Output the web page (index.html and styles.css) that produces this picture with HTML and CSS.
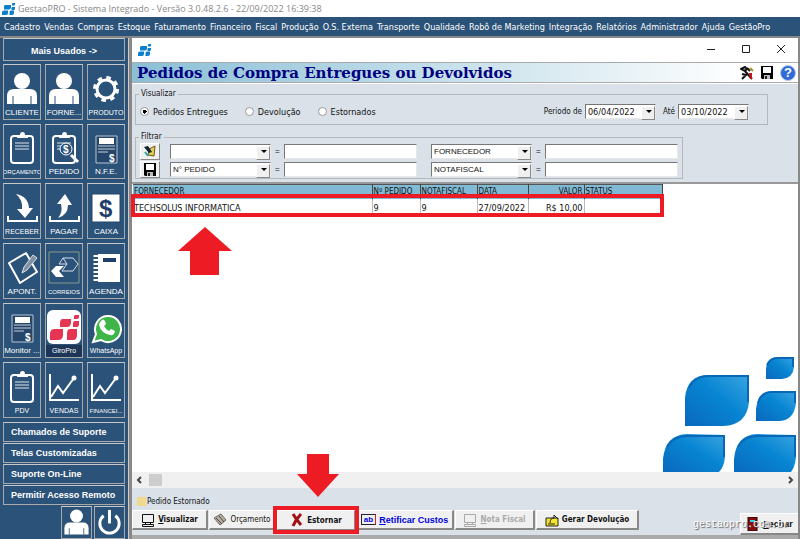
FILE: index.html
```html
<!DOCTYPE html>
<html lang="pt-BR">
    <head>
        <meta charset="UTF-8" />
        <meta name="viewport" content="width=device-width, initial-scale=1.0" />
        <title>GestaoPRO - Sistema Integrado</title>
        <link rel="stylesheet" href="styles.css">
    </head>
    <body>
        <!-- Shared icon shapes -->
        <svg class="defs" width="0" height="0" aria-hidden="true">
            <defs>
                <linearGradient id="leaf-fill" x1="0" y1="1" x2="1" y2="0">
                    <stop offset="0" stop-color="#0a68bd" />
                    <stop offset="0.55" stop-color="#0785d2" />
                    <stop offset="1" stop-color="#3ba5e2" />
                </linearGradient>
                <symbol id="logo" viewBox="0 0 13 12">
                    <path d="M3 2h6v2.500q0 2-2 2H2V4q0-2 1-2zM2 7.500h4V10q0 2-2 2H0V9.500q0-2 2-2zM9 7.500h3V10q0 2-2 2H7.500V9.500q0-2 1.500-2zM10 4h3v1.500q0 1.500-1.500 1.500H9.500V5zM10.500 0H13v1.500q0 1-1 1h-2V1z" fill="#0b7fc9" />
                </symbol>
                <symbol id="person" viewBox="0 0 36 34">
                    <circle cx="18" cy="9" r="8" fill="#fff" />
                    <path d="M3 32V24q0-7 7-7h16q7 0 7 7v8z" fill="#fff" />
                    <path d="M9 32V24M27 32V24" stroke="#2b5278" stroke-width="1" />
                </symbol>
                <symbol id="clipboard" viewBox="0 0 36 34">
                    <rect x="7" y="5" width="22" height="27" rx="3" fill="none" stroke="#fff" stroke-width="2" />
                    <path d="M13 7V4h3q0-3 2.500-3T21 4h3v3z" fill="#fff" />
                    <path d="M11 12h14M11 15h14M11 18h14" stroke="#dfe5ec" stroke-width="1" />
                </symbol>
                <symbol id="invoice" viewBox="0 0 36 34">
                    <path d="M8 5h21v27H8z" fill="#25456b" stroke="#b9c6d4" stroke-width="1" />
                    <path d="M11 7h15v6H11z" fill="#fff" />
                    <path d="M10 15h17M10 18h17M10 21h10" stroke="#c9d2dd" />
                    <text x="21" y="31" class="sign">$</text>
                </symbol>
                <symbol id="chart" viewBox="0 0 36 34">
                    <path d="M4 4v26h29" fill="none" stroke="#fff" stroke-width="2" />
                    <path d="M5 27l7-11 5 7L28 8" fill="none" stroke="#fff" stroke-width="2" />
                    <circle cx="28" cy="8" r="2.500" fill="#fff" />
                </symbol>
                <symbol id="floppy" viewBox="0 0 14 13">
                    <path d="M1 0h12v13H2L1 12z" fill="#000" />
                    <path d="M3 1h8v6H3z" fill="#fff" />
                    <path d="M4 9h6v4H4z" fill="#bbb" />
                    <path d="M5 10h2v3H5z" fill="#222" />
                </symbol>
                <symbol id="monitor" viewBox="0 0 14 14">
                    <path d="M1.500 1.500h11v8h-11zM4.500 9.500h5v2h-5zM1.500 11.500h11v2h-11z" fill="none" stroke="currentColor" />
                    <path class="screen" d="M3 3h8v5H3z" />
                </symbol>
            </defs>
        </svg>

        <header class="titlebar">
            <svg class="logo"><use href="#logo" /></svg>
            <span>GestaoPRO - Sistema Integrado - Versão 3.0.48.2.6 - 22/09/2022 16:39:38</span>
        </header>

        <nav class="menubar">
            <a href="#cadastro">Cadastro</a>
            <a href="#vendas">Vendas</a>
            <a href="#compras">Compras</a>
            <a href="#estoque">Estoque</a>
            <a href="#faturamento">Faturamento</a>
            <a href="#financeiro">Financeiro</a>
            <a href="#fiscal">Fiscal</a>
            <a href="#producao">Produção</a>
            <a href="#os">O.S. Externa</a>
            <a href="#transporte">Transporte</a>
            <a href="#qualidade">Qualidade</a>
            <a href="#robo">Robô de Marketing</a>
            <a href="#integracao">Integração</a>
            <a href="#relatorios">Relatórios</a>
            <a href="#administrador">Administrador</a>
            <a href="#ajuda">Ajuda</a>
            <a href="#gestaopro">GestãoPro</a>
        </nav>

        <div class="container">
            <aside class="sidebar">
                <button class="side-button side-header">Mais Usados -&gt;</button>
                <div class="tiles">
                    <button class="tile">
                        <svg><use href="#person" /></svg>
                        <span>CLIENTE</span>
                    </button>
                    <button class="tile">
                        <svg><use href="#person" /></svg>
                        <span>FORNE...</span>
                    </button>
                    <button class="tile">
                        <svg viewBox="0 0 36 34">
                            <circle cx="18" cy="17" r="9" fill="none" stroke="#fff" stroke-width="3" />
                            <circle cx="18" cy="17" r="11.500" fill="none" stroke="#fff" stroke-width="3" stroke-dasharray="4.500 4.530" />
                        </svg>
                        <span class="small">PRODUTO</span>
                    </button>

                    <button class="tile">
                        <svg><use href="#clipboard" /></svg>
                        <span class="tiny">ORÇAMENTO</span>
                    </button>
                    <button class="tile">
                        <svg viewBox="0 0 36 34">
                            <use href="#clipboard" width="36" height="34" />
                            <circle cx="20" cy="18" r="6" fill="#2b5278" stroke="#fff" stroke-width="1" />
                            <path d="M25 24l7 7" stroke="#fff" stroke-width="3" />
                            <text x="17" y="22" class="sign">$</text>
                        </svg>
                        <span>PEDIDO</span>
                    </button>
                    <button class="tile">
                        <svg><use href="#invoice" /></svg>
                        <span>N.F.E.</span>
                    </button>

                    <button class="tile">
                        <svg viewBox="0 0 36 34">
                            <path d="M4 25v5h29v-5" fill="none" stroke="#fff" stroke-width="2" />
                            <path d="M12 3q12 2 13 14h4l-8 10-8-9h5Q19 9 12 3z" fill="#fff" />
                        </svg>
                        <span class="small">RECEBER</span>
                    </button>
                    <button class="tile">
                        <svg viewBox="0 0 36 34">
                            <path d="M4 25v5h29v-5" fill="none" stroke="#fff" stroke-width="2" />
                            <path d="M12 27q5-6 3-14h-4l8-10 7 11h-4q0 10-10 13z" fill="#fff" />
                        </svg>
                        <span>PAGAR</span>
                    </button>
                    <button class="tile">
                        <svg viewBox="0 0 36 34">
                            <path d="M4 3h28v28H4z" fill="#fff" stroke="#25456b" />
                            <path d="M5 4h26v26H5z" fill="#fff" />
                            <text x="11" y="26" class="dollar">$</text>
                        </svg>
                        <span>CAIXA</span>
                    </button>

                    <button class="tile">
                        <svg viewBox="0 0 36 34">
                            <path d="M5 12L22 2l11 19-17 11z" fill="none" stroke="#fff" stroke-width="2" stroke-linejoin="round" />
                            <path d="M18 22l2-6L29 4l4 3-10 12z" fill="#8191a3" stroke="#dde3ea" />
                        </svg>
                        <span>APONT.</span>
                    </button>
                    <button class="tile">
                        <svg viewBox="0 0 36 34">
                            <path d="M3 1h30v31H3z" fill="none" stroke="#8c9a8e" />
                            <path d="M17 7h10l5 6-5 7H16l5-7zM17 7l-4 6h8" fill="none" stroke="#d8dde6" />
                            <path d="M5 20l5-5h8l-5 5 5 6h-8z" fill="#fff" />
                        </svg>
                        <span class="tiny">CORREIOS</span>
                    </button>
                    <button class="tile">
                        <svg viewBox="0 0 36 34">
                            <path d="M10 3h22v28H10z" fill="#fff" />
                            <path d="M15 7h13v4H15z" fill="#1e3f69" />
                            <path d="M8 4v27" stroke="#fff" stroke-width="5" stroke-dasharray="2 2" />
                        </svg>
                        <span>AGENDA</span>
                    </button>

                    <button class="tile">
                        <svg><use href="#invoice" /></svg>
                        <span>Monitor ...</span>
                    </button>
                    <button class="tile tile-dark">
                        <svg viewBox="0 0 36 34">
                            <rect x="1" y="0" width="34" height="34" rx="6" fill="#fff" />
                            <path d="M17 9h8v3q0 5-4 5h-7v-4q0-4 3-4zM9 19h8v6q0 5-5 5H4v-6q0-5 5-5zM24 19h7v6q0 5-4 5h-6v-6q0-5 3-5zM29 11h4v3q0 3-2 3h-4v-3q0-3 2-3zM29 5h4v2q0 2-2 2h-3V7q0-2 1-2z" fill="#e53553" />
                        </svg>
                        <span class="small">GiroPro</span>
                    </button>
                    <button class="tile">
                        <svg viewBox="0 0 36 34">
                            <path d="M5 32l3-8A13 13 0 1 1 13 30z" fill="#3eb449" stroke="#fff" stroke-width="2" />
                            <path d="M13 11q2-3 4 0l1 3-2 2q2 4 5 5l2-2 4 2q-1 5-5 4-9-2-11-10 0-2 2-4z" fill="#fff" />
                        </svg>
                        <span class="small">WhatsApp</span>
                    </button>

                    <button class="tile">
                        <svg><use href="#clipboard" /></svg>
                        <span class="small">PDV</span>
                    </button>
                    <button class="tile">
                        <svg><use href="#chart" /></svg>
                        <span class="small">VENDAS</span>
                    </button>
                    <button class="tile">
                        <svg><use href="#chart" /></svg>
                        <span class="tiny">FINANCEI...</span>
                    </button>
                </div>
                <button class="side-button">Chamados de Suporte</button>
                <button class="side-button">Telas Customizadas</button>
                <button class="side-button">Suporte On-Line</button>
                <button class="side-button">Permitir Acesso Remoto</button>
                <div class="session">
                    <button aria-label="Usuário">
                        <svg><use href="#person" /></svg>
                    </button>
                    <button aria-label="Sair">
                        <svg viewBox="0 0 30 32">
                            <path d="M9 9a10 10 0 1 0 12 0" fill="none" stroke="#fff" stroke-width="3" />
                            <path d="M15 3v14" stroke="#fff" stroke-width="3" />
                        </svg>
                    </button>
                </div>
            </aside>

            <main class="window">
                <div class="window-bar">
                    <svg class="logo"><use href="#logo" /></svg>
                    <div class="window-controls">
                        <button aria-label="Minimizar"><svg viewBox="0 0 10 10"><path d="M1 5.500h8" /></svg></button>
                        <button aria-label="Maximizar"><svg viewBox="0 0 10 10"><path d="M1.500 1.500h7v7h-7z" /></svg></button>
                        <button aria-label="Fechar janela"><svg viewBox="0 0 10 10"><path d="M1 1l8 8M9 1L1 9" /></svg></button>
                    </div>
                </div>

                <div class="heading">
                    <h1>Pedidos de Compra Entregues ou Devolvidos</h1>
                    <div class="heading-tools">
                        <button aria-label="Configurar">
                            <svg viewBox="0 0 14 14">
                                <path d="M1 3l4-2 2 2-2 2zM4 4l8 9M2 8l4 1-4 4M7 2l3 3" fill="none" stroke="#111" stroke-width="2" />
                                <path d="M9 7h3v6h-2z" fill="#c01818" />
                                <path d="M10 2l3 3" stroke="#a89020" stroke-width="2" />
                            </svg>
                        </button>
                        <button aria-label="Salvar"><svg viewBox="0 0 14 14"><use href="#floppy" width="14" height="13" /></svg></button>
                        <button class="help" aria-label="Ajuda">?</button>
                    </div>
                </div>

                <form class="filters">
                    <fieldset class="view">
                        <legend>Visualizar</legend>
                        <label><input type="radio" name="view" checked /> Pedidos Entregues</label>
                        <label><input type="radio" name="view" /> Devolução</label>
                        <label><input type="radio" name="view" /> Estornados</label>
                        <div class="period">
                            <label for="from">Periodo de</label>
                            <span class="combo date"><select id="from"><option>06/04/2022</option></select></span>
                            <label for="to">Até</label>
                            <span class="combo date"><select id="to"><option>03/10/2022</option></select></span>
                        </div>
                    </fieldset>
                    <fieldset class="filter">
                        <legend>Filtrar</legend>
                        <div class="filter-row">
                            <button type="button" class="tool" aria-label="Limpar filtro">
                                <svg viewBox="0 0 14 13">
                                    <path d="M6 4l6-3-1 10-6-1z" fill="#e3cf5a" stroke="#6b5a10" />
                                    <path d="M1 2l4-1 4 6-3 1z" fill="#123" />
                                    <path d="M2 7l3 4" stroke="#2aa7b5" stroke-width="2" />
                                </svg>
                            </button>
                            <span class="combo"><select aria-label="Campo 1"><option></option></select></span>
                            <span>=</span>
                            <input type="text" aria-label="Valor 1" />
                            <span class="combo second"><select aria-label="Campo 2"><option>FORNECEDOR</option></select></span>
                            <span>=</span>
                            <input type="text" aria-label="Valor 2" />
                        </div>
                        <div class="filter-row">
                            <button type="button" class="tool" aria-label="Salvar filtro">
                                <svg><use href="#floppy" /></svg>
                            </button>
                            <span class="combo"><select aria-label="Campo 3"><option>N° PEDIDO</option></select></span>
                            <span>=</span>
                            <input type="text" aria-label="Valor 3" />
                            <span class="combo second"><select aria-label="Campo 4"><option>NOTAFISCAL</option></select></span>
                            <span>=</span>
                            <input type="text" aria-label="Valor 4" />
                        </div>
                    </fieldset>
                </form>

                <section class="results">
                    <table>
                        <thead>
                            <tr>
                                <th class="col-supplier">FORNECEDOR</th>
                                <th class="col-order">Nº PEDIDO</th>
                                <th class="col-invoice">NOTAFISCAL</th>
                                <th class="col-date">DATA</th>
                                <th class="col-value">VALOR</th>
                                <th class="col-status">STATUS</th>
                            </tr>
                        </thead>
                        <tbody>
                            <tr>
                                <td>TECHSOLUS INFORMATICA</td>
                                <td>9</td>
                                <td>9</td>
                                <td>27/09/2022</td>
                                <td class="col-value">R$ 10,00</td>
                                <td></td>
                            </tr>
                        </tbody>
                    </table>
                    <div class="row-mark"></div>
                    <svg class="arrow arrow-up" viewBox="0 0 54 48"><path d="M27 0l27 24H41v24H12V24H0z" /></svg>
                    <svg class="leaves" viewBox="0 0 133 116">
                        <g fill="url(#leaf-fill)">
                            <path d="M22 70V42Q24 19 46 19L86 20V46Q84 69 60 70z" />
                            <path d="M103 23V13Q104 1 115 1H131V11Q130 22 119 23z" />
                            <path d="M93 65V53Q95 36 109 35H133V47Q131 64 117 65z" />
                            <path d="M0 116V103Q2 79 24 78L62 79V101Q61 111 56 116z" />
                            <path d="M71 116V103Q73 79 94 78L133 79V101Q132 111 128 116z" />
                        </g>
                        <g fill="none" stroke="#0868b6" stroke-width="2">
                            <path d="M26 32Q31 20 46 20H85V46" />
                            <path d="M104 9Q107 2 115 2h15v9" />
                            <path d="M95 47q3-11 14-11h23v11" />
                            <path d="M4 91Q10 80 24 80h37v21" />
                            <path d="M75 91q6-11 19-11h38v21" />
                        </g>
                    </svg>
                </section>

                <div class="scrollbar">
                    <svg viewBox="0 0 6 8"><path d="M5 1L2 4l3 3" /></svg>
                    <div class="thumb"></div>
                    <svg viewBox="0 0 6 8"><path d="M1 1l3 3-3 3" /></svg>
                </div>

                <footer class="footer">
                    <div class="key"><i></i>Pedido Estornado</div>
                    <div class="actions">
                        <button class="view-button"><svg><use href="#monitor" /></svg><span><u>V</u>isualizar</span></button>
                        <button class="quote">
                            <svg viewBox="0 0 14 14">
                                <path d="M1 5l7-4 5 6-6 5z" fill="#b9b0a4" stroke="#6e6459" />
                                <path d="M3 5l6 6M6 3l5 6" stroke="#444" />
                            </svg>
                            <span>Orçamento</span>
                        </button>
                        <button class="reverse">
                            <svg viewBox="0 0 14 14"><path d="M3 1q3 5 8 11M11 1Q6 6 3 13" fill="none" stroke="#a30f14" stroke-width="3" /></svg>
                            <span>Estornar</span>
                            <svg class="arrow arrow-down" viewBox="0 0 42 43"><path d="M10 0h22v20h10L21 43 0 20h10z" /></svg>
                        </button>
                        <button class="costs">
                            <span class="edit-icon">ab</span>
                            <span><u>R</u>etificar Custos</span>
                        </button>
                        <button class="invoice" disabled><svg><use href="#monitor" /></svg><span><u>N</u>ota Fiscal</span></button>
                        <button class="return">
                            <svg viewBox="0 0 14 14">
                                <path d="M1 5h12v8H1z" fill="#f4e62c" stroke="#222" />
                                <path d="M5 10q0-5 4-5V2l4 4M3 11h7" fill="none" stroke="#222" />
                            </svg>
                            <span>Gerar Devolução</span>
                        </button>
                        <button class="close">
                            <svg viewBox="0 0 14 14">
                                <path d="M2 0h9v14H2z" fill="#860b0e" stroke="#200" />
                                <path d="M4 3h5v2H4z" fill="#35d5e0" />
                            </svg>
                            <span><u>F</u>echar</span>
                        </button>
                    </div>
                </footer>
                <div class="watermark">gestaopro.com.br</div>
            </main>
        </div>
    </body>
</html>
```
FILE: styles.css
```css
:root {
    --navy: #2b5278;
    --panel: #dae1e9;
    --face: #f0f0f0;
    --edge: #9a9a9a;
    --mark: #ed1c24;
    --ui: "DejaVu Sans Condensed", "Noto Sans", sans-serif;
    --plain: "Liberation Sans", Arial, sans-serif;
}

* {
    box-sizing: border-box;
}

body {
    margin: 0;
    min-height: 100vh;
    display: flex;
    flex-direction: column;
    font-family: var(--ui);
    font-size: 8px;
    color: #111;
    background-color: #fff;
    overflow: hidden;
}

button,
input,
select {
    font: inherit;
    color: inherit;
    margin: 0;
    padding: 0;
    border-radius: 0;
}

.defs {
    position: absolute;
}

.logo {
    width: 13px;
    height: 12px;
}

.titlebar {
    height: 17px;
    display: flex;
    align-items: center;
    gap: 3px;
    padding-left: 2px;
    font-family: "Open Sans", sans-serif;
    font-size: 9px;
    color: #888;
}

.menubar {
    height: 19px;
    display: flex;
    align-items: center;
    gap: 4px;
    padding-left: 4px;
    background-color: var(--navy);
    font-size: 9px;
    white-space: nowrap;
}

.menubar a {
    color: #fff;
    text-decoration: none;
}

.container {
    flex: 1;
    display: flex;
    border-top: 2px solid #888;
}

/* Sidebar */
.sidebar {
    width: 129px;
    display: flex;
    flex-direction: column;
    gap: 1px;
    padding: 0 3px;
    background-color: var(--navy);
    border-right: 1px solid #ccc;
    font-family: var(--plain);
    color: #fff;
}

.sidebar button {
    background-color: var(--navy);
    border: 1px solid #a9a9a9;
    border-top-color: #c8c8c8;
}

.side-button {
    height: 20px;
    padding-left: 7px;
    text-align: left;
    font-size: 9px;
    font-weight: bold;
    white-space: nowrap;
}

.sidebar .side-button {
    padding-left: 7px;
}

.sidebar .side-header {
    height: 23px;
    padding: 2px 0 0;
    text-align: center;
}

.tiles {
    flex: 1;
    display: grid;
    grid-template-columns: repeat(3, 1fr);
    grid-template-rows: repeat(6, 1fr);
    gap: 4px;
    padding: 2px 0 3px;
}

.tile {
    display: flex;
    flex-direction: column;
    align-items: center;
    justify-content: flex-end;
    gap: 1px;
    overflow: hidden;
    white-space: nowrap;
}

.tile svg {
    width: 36px;
    height: 34px;
    flex: none;
}

.tile span {
    line-height: 12px;
}

.tile .small {
    font-size: 7px;
}

.tile .tiny {
    font-size: 6px;
}

.tile-dark span {
    align-self: stretch;
    background-color: #1d3557;
}

.sign {
    font: bold 10px "Liberation Sans", sans-serif;
    fill: #fff;
}

.dollar {
    font: bold 24px "Liberation Sans", sans-serif;
    fill: #1e3f69;
}

.session {
    display: flex;
    justify-content: flex-end;
    gap: 2px;
}

.session button {
    width: 31px;
    height: 33px;
}

.session svg {
    display: block;
    width: 29px;
    height: 31px;
}

/* Window */
.window {
    position: relative;
    flex: 1;
    min-width: 0;
    display: flex;
    flex-direction: column;
    border: solid #888;
    border-width: 0 2px 0 3px;
}

.window-bar {
    height: 24px;
    display: flex;
    align-items: center;
    justify-content: space-between;
    padding-left: 6px;
}

.window-controls {
    display: flex;
}

.window-controls button,
.heading-tools button {
    border: 0;
    background: none;
}

.window-controls button {
    width: 35px;
    height: 22px;
}

.window-controls svg {
    width: 10px;
    height: 10px;
    fill: none;
    stroke: #222;
}

.heading {
    height: 21px;
    display: flex;
    align-items: center;
    justify-content: space-between;
    padding-left: 5px;
    background: linear-gradient(to right, #8abfd6, #fff 92%);
    border-top: 1px solid #aaa;
    border-bottom: 1px solid #aaa;
}

.heading h1 {
    margin: 0;
    font-family: "DejaVu Serif", serif;
    font-size: 15px;
    line-height: 18px;
    white-space: nowrap;
    color: #000080;
}

.heading-tools {
    display: flex;
    align-items: center;
    gap: 6px;
    padding-right: 2px;
}

.heading-tools svg {
    display: block;
    width: 14px;
    height: 14px;
}

.heading-tools .help {
    width: 16px;
    height: 16px;
    border: 1px solid #b8c8e8;
    border-radius: 50%;
    background-color: #2f6bd6;
    font-family: var(--plain);
    font-size: 13px;
    font-weight: bold;
    line-height: 14px;
    color: #fff;
}

.filters {
    padding: 5px 30px 3px 3px;
    background-color: var(--panel);
    border-top: 1px solid #fff;
    border-bottom: 2px solid #999;
}

fieldset {
    min-width: 0;
    margin: 0;
    padding: 0 4px;
    border: 1px solid #b4b8bd;
}

legend {
    margin-left: -1px;
    padding: 0 2px;
    line-height: 10px;
}

.view {
    height: 36px;
    display: flex;
    align-items: center;
    gap: 17px;
    margin-bottom: 7px;
    font-size: 9px;
}

.view legend,
.period label {
    font-size: 8px;
}

.view label {
    display: flex;
    align-items: center;
    gap: 4px;
}

.view input {
    appearance: none;
    width: 9px;
    height: 9px;
    border: 1px solid #999;
    border-radius: 50%;
    background-color: #fff;
}

.view input:checked {
    background-image: radial-gradient(circle, #000 2px, #fff 2px);
}

.period {
    display: flex;
    align-items: center;
    gap: 3px;
    margin-left: auto;
    margin-right: 9px;
}

.combo {
    position: relative;
    width: 101px;
    height: 15px;
}

.combo select,
.filter-row input {
    appearance: none;
    display: block;
    width: 100%;
    height: 15px;
    padding: 0 2px;
    border: 1px solid #e8e8e8;
    border-top-color: #777;
    border-left-color: #777;
    background-color: #fff;
}

/* drop-down button */
.combo::before {
    content: "";
    position: absolute;
    top: 2px;
    right: 1px;
    width: 12px;
    height: 12px;
    background-color: var(--face);
    border: 1px solid #fff;
    border-right-color: #888;
    border-bottom-color: #888;
    pointer-events: none;
}

.combo::after {
    content: "";
    position: absolute;
    top: 6px;
    right: 4px;
    border: 3px solid transparent;
    border-top-color: #000;
    pointer-events: none;
}

.date {
    width: 71px;
    margin-right: 4px;
}

.date:last-child {
    margin-right: 5px;
}

.filter {
    width: fit-content;
}

.filter-row {
    display: flex;
    align-items: center;
    gap: 4px;
    height: 18px;
    font-family: var(--plain);
}

.filter-row span:not(.combo) {
    width: 5px;
}

.filter-row input {
    width: 133px;
}

.tool {
    width: 20px;
    height: 17px;
    margin-right: 6px;
    border: 1px solid #fff;
    border-right-color: #888;
    border-bottom-color: #888;
    background-color: var(--face);
}

.tool svg {
    display: block;
    width: 14px;
    height: 13px;
    margin: 0 auto;
}

.second {
    margin-left: 10px;
}

/* Results grid */
.results {
    position: relative;
    flex: 1;
    display: flex;
    flex-direction: column;
    justify-content: space-between;
    padding-left: 1px;
    background-color: #fff;
}

table {
    width: 530px;
    table-layout: fixed;
    border-collapse: collapse;
    border-top: 1px solid #555;
}

th,
td {
    padding: 0 1px;
    text-align: left;
    font-weight: normal;
    white-space: nowrap;
    border-right: 1px solid #bbb;
}

th {
    height: 14px;
    line-height: 12px;
    background-color: #80bad4;
    border-right-color: #444;
}

td {
    height: 18px;
    font-size: 9px;
}

.col-supplier {
    width: 239px;
}

.col-order {
    width: 48px;
}

.col-invoice {
    width: 57px;
}

.col-date {
    width: 51px;
}

.col-value {
    width: 56px;
    text-align: right;
}

.row-mark {
    position: absolute;
    top: 10px;
    left: -1px;
    width: 533px;
    height: 23px;
    border: 4px solid var(--mark);
}

.arrow {
    position: absolute;
    fill: var(--mark);
}

.arrow-up {
    top: 43px;
    left: 46px;
    width: 54px;
    height: 48px;
}

.leaves {
    align-self: flex-end;
    width: 133px;
    height: 116px;
    margin-right: 2px;
}

.scrollbar {
    height: 16px;
    display: flex;
    align-items: center;
    gap: 7px;
    padding: 0 4px;
    background-color: var(--face);
}

.scrollbar svg {
    width: 6px;
    height: 8px;
    fill: none;
    stroke: #444;
    stroke-width: 2;
}

.thumb {
    width: 13px;
    height: 12px;
    margin-right: auto;
    background-color: #cdcdcd;
}

/* Footer */
.footer {
    padding-top: 7px;
    background-color: var(--panel);
    border-bottom: 4px solid #aaa;
}

.key {
    display: flex;
    align-items: center;
    gap: 1px;
    height: 12px;
    padding-left: 5px;
}

.key i {
    width: 9px;
    height: 9px;
    background-color: #f0d88e;
}

.actions {
    display: flex;
    align-items: flex-start;
    gap: 1px;
    height: 28px;
    padding-top: 3px;
}

.actions button {
    position: relative;
    height: 20px;
    display: flex;
    align-items: center;
    justify-content: center;
    gap: 3px;
    border: 1px solid #fff;
    border-right: 2px solid #888;
    border-bottom: 2px solid #888;
    background-color: var(--face);
    font-weight: bold;
    white-space: nowrap;
}

.actions svg {
    flex: none;
    width: 14px;
    height: 14px;
}

.screen {
    fill: none;
}

.view-button .screen {
    fill: #2fb54a;
}

.view-button {
    width: 76px;
}

.actions .quote {
    width: 67px;
    font-weight: normal;
}

.actions .reverse {
    width: 78px;
    border-width: 1px;
    outline: 4px solid var(--mark);
    z-index: 1;
}

.actions .arrow-down {
    bottom: 32px;
    left: 19px;
    width: 42px;
    height: 43px;
}

.actions .costs {
    width: 98px;
    font-family: var(--plain);
    font-size: 9px;
    color: #0000e0;
}

.edit-icon {
    padding: 0 2px;
    border: 1px solid #223;
    border-right-color: #c22;
    line-height: 9px;
    font-size: 8px;
}

.actions .invoice {
    width: 80px;
    color: #aaa;
}

.actions .return {
    width: 103px;
}

.actions .close {
    align-self: flex-end;
    width: 58px;
    height: 22px;
    margin-left: auto;
    border-right: 0;
    font-family: var(--plain);
    font-size: 9px;
}

.watermark {
    position: absolute;
    right: 9px;
    bottom: 8px;
    z-index: 2;
    font-family: "Liberation Mono", monospace;
    font-size: 10px;
    line-height: 12px;
    color: #fff;
    text-shadow: 1px 1px 1px #555;
    pointer-events: none;
}
```
